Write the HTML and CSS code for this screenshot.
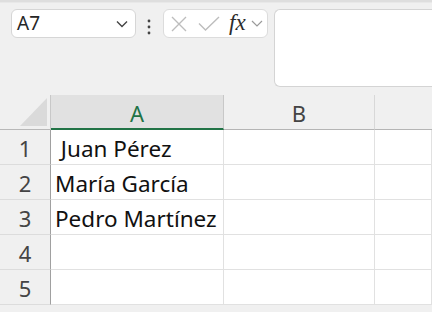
FILE: index.html
```html
<!DOCTYPE html>
<html>
<head>
<meta charset="utf-8">
<link rel="stylesheet" href="styles.css">
</head>
<body>
<div class="topstrip"></div>
<div class="toolbar">
  <div class="namebox">
    <span class="ref">A7</span>
    <svg class="chev" width="12" height="8" viewBox="0 0 12 8"><polyline points="1,1.5 6,6.5 11,1.5" fill="none" stroke="#444" stroke-width="1.4"/></svg>
  </div>
  <svg class="dots" width="6" height="16" viewBox="0 0 6 16"><circle cx="3" cy="2" r="1.4" fill="#444"/><circle cx="3" cy="8" r="1.4" fill="#444"/><circle cx="3" cy="14" r="1.4" fill="#444"/></svg>
  <div class="fxbox">
    <svg class="x" width="16" height="16" viewBox="0 0 16 16"><path d="M1 1 L15 15 M15 1 L1 15" stroke="#bdbdbd" stroke-width="1.4" fill="none"/></svg>
    <svg class="check" width="22" height="15" viewBox="0 0 22 15"><path d="M1 7.5 L7.5 14 L21 1" stroke="#bdbdbd" stroke-width="1.4" fill="none"/></svg>
    <span class="fx">fx</span>
    <svg class="chev2" width="12" height="7" viewBox="0 0 12 7"><polyline points="1,1 6,6 11,1" fill="none" stroke="#9a9a9a" stroke-width="1.2"/></svg>
  </div>
  <div class="formula"></div>
</div>
<div class="grid">
  <div class="corner"><div class="tri"></div></div>
  <div class="colhead sel">A</div>
  <div class="colhead">B</div>
  <div class="colhead last"></div>

  <div class="rowhead">1</div>
  <div class="cell">&nbsp;Juan Pérez</div>
  <div class="cell"></div>
  <div class="cell"></div>

  <div class="rowhead">2</div>
  <div class="cell">María García</div>
  <div class="cell"></div>
  <div class="cell"></div>

  <div class="rowhead">3</div>
  <div class="cell">Pedro Martínez</div>
  <div class="cell"></div>
  <div class="cell"></div>

  <div class="rowhead">4</div>
  <div class="cell"></div>
  <div class="cell"></div>
  <div class="cell"></div>

  <div class="rowhead">5</div>
  <div class="cell"></div>
  <div class="cell"></div>
  <div class="cell"></div>
</div>
</body>
</html>
```
FILE: styles.css
```css
html, body {
  margin: 0;
  padding: 0;
  background: #f0f0f0;
  width: 432px;
  height: 312px;
  overflow: hidden;
  font-family: "Noto Sans", "DejaVu Sans", sans-serif;
}
.topstrip {
  height: 2px;
  background: #dedede;
  border-bottom: 1px solid #e8e8e8;
}
.toolbar {
  display: flex;
  align-items: flex-start;
  padding: 6px 0 0 11px;
  height: 89px;
  box-sizing: border-box;
}
.namebox {
  width: 125px;
  height: 29px;
  box-sizing: border-box;
  background: #fff;
  border: 1px solid #d6d6d6;
  border-radius: 6px;
  display: flex;
  align-items: center;
  padding: 0 7px 0 5px;
}
.ref {
  font-size: 19px;
  line-height: 1;
  color: #262626;
  flex: 1;
}
.chev { display: block; }
.dots {
  display: block;
  margin: 10px 0 0 10px;
}
.fxbox {
  margin-left: 11px;
  width: 105px;
  height: 29px;
  box-sizing: border-box;
  background: #fff;
  border: 1px solid #dcdcdc;
  border-radius: 6px;
  display: flex;
  align-items: center;
  padding-left: 7px;
}
.x { display: block; }
.check { display: block; margin-left: 11px; margin-top: -1px; }
.fx {
  font-family: "Liberation Serif", "DejaVu Serif", serif;
  font-style: italic;
  font-size: 23px;
  color: #2b2b2b;
  margin-left: 9px;
  line-height: 1;
  margin-top: -3px;
}
.chev2 { display: block; margin-left: 5px; }
.formula {
  margin-left: 6px;
  flex: 1;
  height: 78px;
  box-sizing: border-box;
  background: #fff;
  border: 1px solid #d4d4d4;
  border-right: none;
  border-radius: 6px 0 0 6px;
}
.grid {
  margin-top: 3px;
  display: grid;
  grid-template-columns: 51px 173px 151px 57px;
  grid-template-rows: 35px repeat(5, 35px);
}
.corner {
  border-right: 1px solid #c8c8c8;
  border-bottom: 1px solid #b8b8b8;
  box-sizing: border-box;
  position: relative;
}
.tri {
  position: absolute;
  right: 3px;
  bottom: 3px;
  width: 0;
  height: 0;
  border-style: solid;
  border-width: 0 0 28px 27px;
  border-color: transparent transparent #dadada transparent;
}
.colhead {
  box-sizing: border-box;
  border-right: 1px solid #d8d8d8;
  border-bottom: 1px solid #b5b5b5;
  font-size: 22px;
  color: #444;
  display: flex;
  align-items: center;
  justify-content: center;
  padding-top: 2px;
}
.colhead.sel {
  background: #e1e1e1;
  color: #217346;
  border-bottom: 2px solid #217346;
  border-right: 1px solid #c8c8c8;
}
.colhead.last { border-right: none; }
.rowhead {
  box-sizing: border-box;
  border-right: 1px solid #a0a0a0;
  border-bottom: 1px solid #dcdcdc;
  font-size: 22px;
  color: #444;
  display: flex;
  align-items: center;
  justify-content: center;
  padding-top: 2px;
}
.cell {
  box-sizing: border-box;
  background: #fff;
  border-right: 1px solid #e1e1e1;
  border-bottom: 1px solid #e1e1e1;
  font-size: 22.5px;
  color: #111;
  display: flex;
  align-items: center;
  padding: 2px 0 0 4px;
  white-space: nowrap;
}
```
